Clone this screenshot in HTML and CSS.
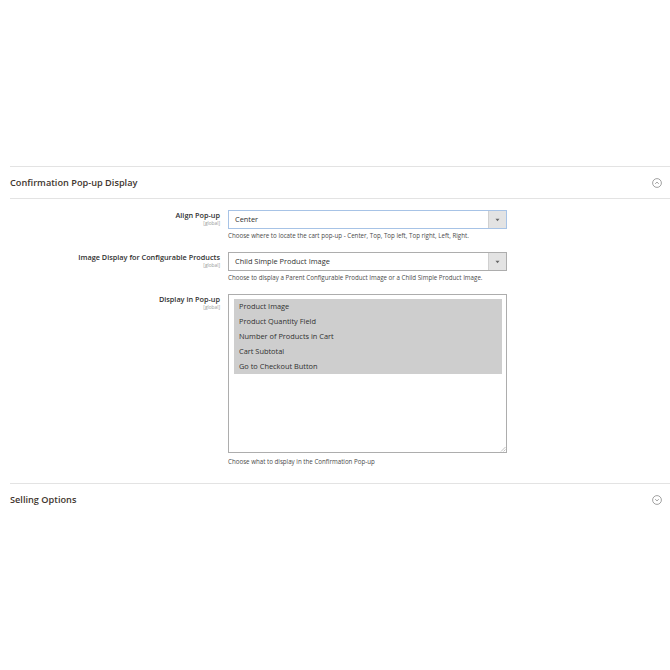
FILE: index.html
```html
<!DOCTYPE html>
<html>
<head>
<meta charset="utf-8">
<link rel="stylesheet" href="styles.css">
</head>
<body>
<div class="page">
  <section class="section">
    <div class="section-head">
      <span class="section-title">Confirmation Pop-up Display</span>
      <svg class="toggle" width="10" height="10" viewBox="0 0 10 10"><circle cx="5" cy="5" r="4.4" fill="none" stroke="#8a8a8a" stroke-width="0.8"/><path d="M3.2 5.8 L5 4.1 L6.8 5.8" fill="none" stroke="#8a8a8a" stroke-width="0.8"/></svg>
    </div>
    <div class="fields">
      <div class="row">
        <div class="label"><span class="label-text">Align Pop-up</span><span class="scope">[global]</span></div>
        <div class="control">
          <div class="select focus"><span class="value">Center</span><span class="arrow"><svg width="5" height="4" viewBox="0 0 5 4"><path d="M0.5 0.8 L4.5 0.8 L2.5 3.3Z" fill="#666"/></svg></span></div>
          <div class="note">Choose where to locate the cart pop-up - Center, Top, Top left, Top right, Left, Right.</div>
        </div>
      </div>
      <div class="row">
        <div class="label"><span class="label-text">Image Display for Configurable Products</span><span class="scope">[global]</span></div>
        <div class="control">
          <div class="select"><span class="value">Child Simple Product Image</span><span class="arrow"><svg width="5" height="4" viewBox="0 0 5 4"><path d="M0.5 0.8 L4.5 0.8 L2.5 3.3Z" fill="#666"/></svg></span></div>
          <div class="note">Choose to display a Parent Configurable Product Image or a Child Simple Product Image.</div>
        </div>
      </div>
      <div class="row">
        <div class="label"><span class="label-text">Display in Pop-up</span><span class="scope">[global]</span></div>
        <div class="control">
          <div class="multi">
            <div class="opt">Product Image</div>
            <div class="opt">Product Quantity Field</div>
            <div class="opt">Number of Products in Cart</div>
            <div class="opt">Cart Subtotal</div>
            <div class="opt">Go to Checkout Button</div>
            <svg class="grip" width="6" height="6" viewBox="0 0 6 6"><path d="M5.5 1 L1 5.5 M5.5 3.5 L3.5 5.5" stroke="#999" stroke-width="0.6"/></svg>
          </div>
          <div class="note">Choose what to display in the Confirmation Pop-up</div>
        </div>
      </div>
    </div>
  </section>
  <section class="section last">
    <div class="section-head">
      <span class="section-title">Selling Options</span>
      <svg class="toggle" width="10" height="10" viewBox="0 0 10 10"><circle cx="5" cy="5" r="4.4" fill="none" stroke="#8a8a8a" stroke-width="0.8"/><path d="M3.2 4.2 L5 5.9 L6.8 4.2" fill="none" stroke="#8a8a8a" stroke-width="0.8"/></svg>
    </div>
  </section>
</div>
</body>
</html>
```
FILE: styles.css
```css
html, body {
  margin: 0;
  padding: 0;
  background: #fff;
}
body {
  font-family: "Open Sans", "Liberation Sans", sans-serif;
  color: #303030;
  font-size: 8px;
  line-height: 1;
}
.page {
  width: 670px;
  height: 670px;
  padding-top: 166px;
  padding-left: 10px;
  box-sizing: border-box;
}
.section {
  border-top: 1px solid #e3e3e3;
}
.section-head {
  height: 31px;
  display: flex;
  align-items: center;
  justify-content: space-between;
  padding-right: 8px;
  border-bottom: 1px solid #e3e3e3;
}
.section.last .section-head {
  border-bottom: none;
}
.section-title {
  font-size: 9.2px;
  font-weight: 600;
  color: #41362f;
}
.toggle {
  display: block;
}
.fields {
  padding-top: 11px;
  padding-bottom: 17px;
  display: flex;
  flex-direction: column;
  gap: 12px;
}
.row {
  display: flex;
  gap: 8px;
}
.label {
  width: 210px;
  display: flex;
  flex-direction: column;
  align-items: flex-end;
  padding-top: 1px;
}
.label-text {
  font-size: 7.3px;
  font-weight: 600;
  color: #303030;
  line-height: 9px;
}
.scope {
  font-size: 4.8px;
  color: #999;
  line-height: 6px;
}
.control {
  width: 279px;
}
.select {
  height: 19px;
  box-sizing: border-box;
  border: 1px solid #adadad;
  display: flex;
  align-items: stretch;
  background: #fff;
}
.select.focus {
  border-color: #a7c3e6;
}
.value {
  flex: 1;
  display: flex;
  align-items: center;
  padding-left: 6px;
  font-size: 7.4px;
  color: #303030;
}
.arrow {
  width: 17px;
  background: #e3e3e3;
  border-left: 1px solid #d0d0d0;
  display: flex;
  align-items: center;
  justify-content: center;
}
.note {
  font-size: 6.2px;
  color: #4a4a4a;
  margin-top: 3px;
  line-height: 8px;
}
.multi {
  position: relative;
  height: 159px;
  box-sizing: border-box;
  border: 1px solid #adadad;
  padding: 4px 4px 0 5px;
}
.opt {
  background: #cecece;
  height: 15px;
  line-height: 15px;
  font-size: 7.4px;
  padding-left: 5px;
  color: #303030;
}
.grip {
  position: absolute;
  right: 0;
  bottom: 0;
}
.multi + .note {
  margin-top: 5px;
}
```
